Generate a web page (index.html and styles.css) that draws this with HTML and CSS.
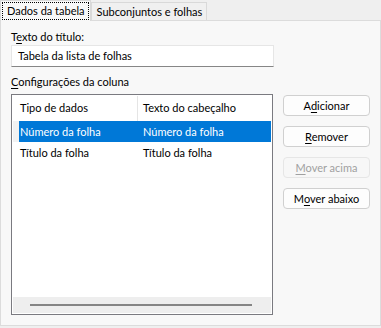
FILE: index.html
```html
<!DOCTYPE html>
<html lang="pt">
<head>
    <meta charset="UTF-8">
    <title>Dados da tabela</title>
    <link rel="stylesheet" href="styles.css">
</head>
<body>
    <div class="tabs">
        <div class="tab active"><span class="focus">Dados da tabela</span></div>
        <div class="tab">Subconjuntos e folhas</div>
    </div>
    <div class="panel">
        <div class="label">T<u>e</u>xto do título:</div>
        <div class="input">Tabela da lista de folhas</div>
        <div class="label second"><u>C</u>onfigurações da coluna</div>
        <div class="columns">
            <div class="list">
                <div class="row head">
                    <div class="cell">Tipo de dados</div>
                    <div class="cell">Texto do cabeçalho</div>
                </div>
                <div class="row selected">
                    <div class="cell">Número da folha</div>
                    <div class="cell">Número da folha</div>
                </div>
                <div class="row">
                    <div class="cell">Título da folha</div>
                    <div class="cell">Título da folha</div>
                </div>
                <div class="spacer"></div>
                <div class="hscroll"><div class="thumb"></div></div>
            </div>
            <div class="buttons">
                <button>A<u>d</u>icionar</button>
                <button><u>R</u>emover</button>
                <button disabled><u>M</u>over acima</button>
                <button>M<u>o</u>ver abaixo</button>
            </div>
        </div>
    </div>
</body>
</html>
```
FILE: styles.css
```css
* {
    margin: 0;
    padding: 0;
    box-sizing: border-box;
}

body {
    width: 381px;
    height: 328px;
    background-color: #efefef;
    font-family: Lato, "Noto Sans", sans-serif;
    font-size: 11px;
    color: #000;
    overflow: hidden;
}

u {
    text-decoration-thickness: 1px;
    text-underline-offset: 2px;
}

.tabs {
    display: flex;
    align-items: flex-end;
    height: 20px;
    white-space: nowrap;
}

.tab {
    height: 18px;
    padding: 0 4px 0 5px;
    line-height: 17px;
    font-size: 11px;
    border: 1px solid #d9d9d9;
    border-bottom: none;
    background-color: #f0f0f0;
}

.tab.active {
    height: 21px;
    padding: 1px 1px 0;
    margin-bottom: -1px;
    background-color: #f8f8f8;
    position: relative;
    z-index: 1;
}

.focus {
    display: block;
    height: 18px;
    line-height: 16px;
    padding: 0 3px 0 4px;
    border: 1px dotted #000;
}

.panel {
    width: 381px;
    height: 306px;
    border: 1px solid #dcdcdc;
    background-color: #f8f8f8;
    padding: 8px 10px 0;
}

.label {
    line-height: 16px;
}

.input {
    width: 263px;
    height: 22px;
    padding-left: 6px;
    line-height: 20px;
    background-color: #fff;
    border: 1px solid #e6e6e6;
    border-bottom-color: #868686;
}

.label.second {
    margin-top: 7px;
}

.columns {
    display: flex;
    margin-top: 4px;
}

.list {
    width: 263px;
    height: 221px;
    border: 1px solid #7a7a80;
    background-color: #fff;
    display: flex;
    flex-direction: column;
    padding: 1px;
}

.row {
    display: flex;
    height: 21px;
    line-height: 21px;
    margin-left: 6px;
}

.row.head {
    height: 25px;
    line-height: 24px;
    margin-left: 0;
    padding-left: 6px;
}

.row .cell:first-child {
    width: 119px;
    padding-left: 1px;
}

.row.head .cell:first-child {
    border-right: 1px solid #e5e5e5;
}

.row .cell:last-child {
    padding-left: 5px;
}

.row.selected {
    background-color: #0078d7;
    color: #fff;
    box-shadow: -6px 0 0 #f2f2f2;
}

.spacer {
    flex: 1;
}

.hscroll {
    height: 16px;
    background-color: #eeeeee;
    padding: 7px 0 0 17px;
}

.thumb {
    width: 222px;
    height: 2px;
    background-color: #858585;
}

.buttons {
    display: flex;
    flex-direction: column;
    gap: 10px;
    margin-left: 10px;
    padding-top: 1px;
}

button {
    width: 87px;
    height: 21px;
    font-family: inherit;
    font-size: 11px;
    color: #000;
    background-color: #fdfdfd;
    border: 1px solid #d0d0d0;
    border-radius: 4px;
}

button:disabled {
    color: #a0a0a0;
    background-color: #f7f7f7;
    border-color: #e6e6e6;
}
```
